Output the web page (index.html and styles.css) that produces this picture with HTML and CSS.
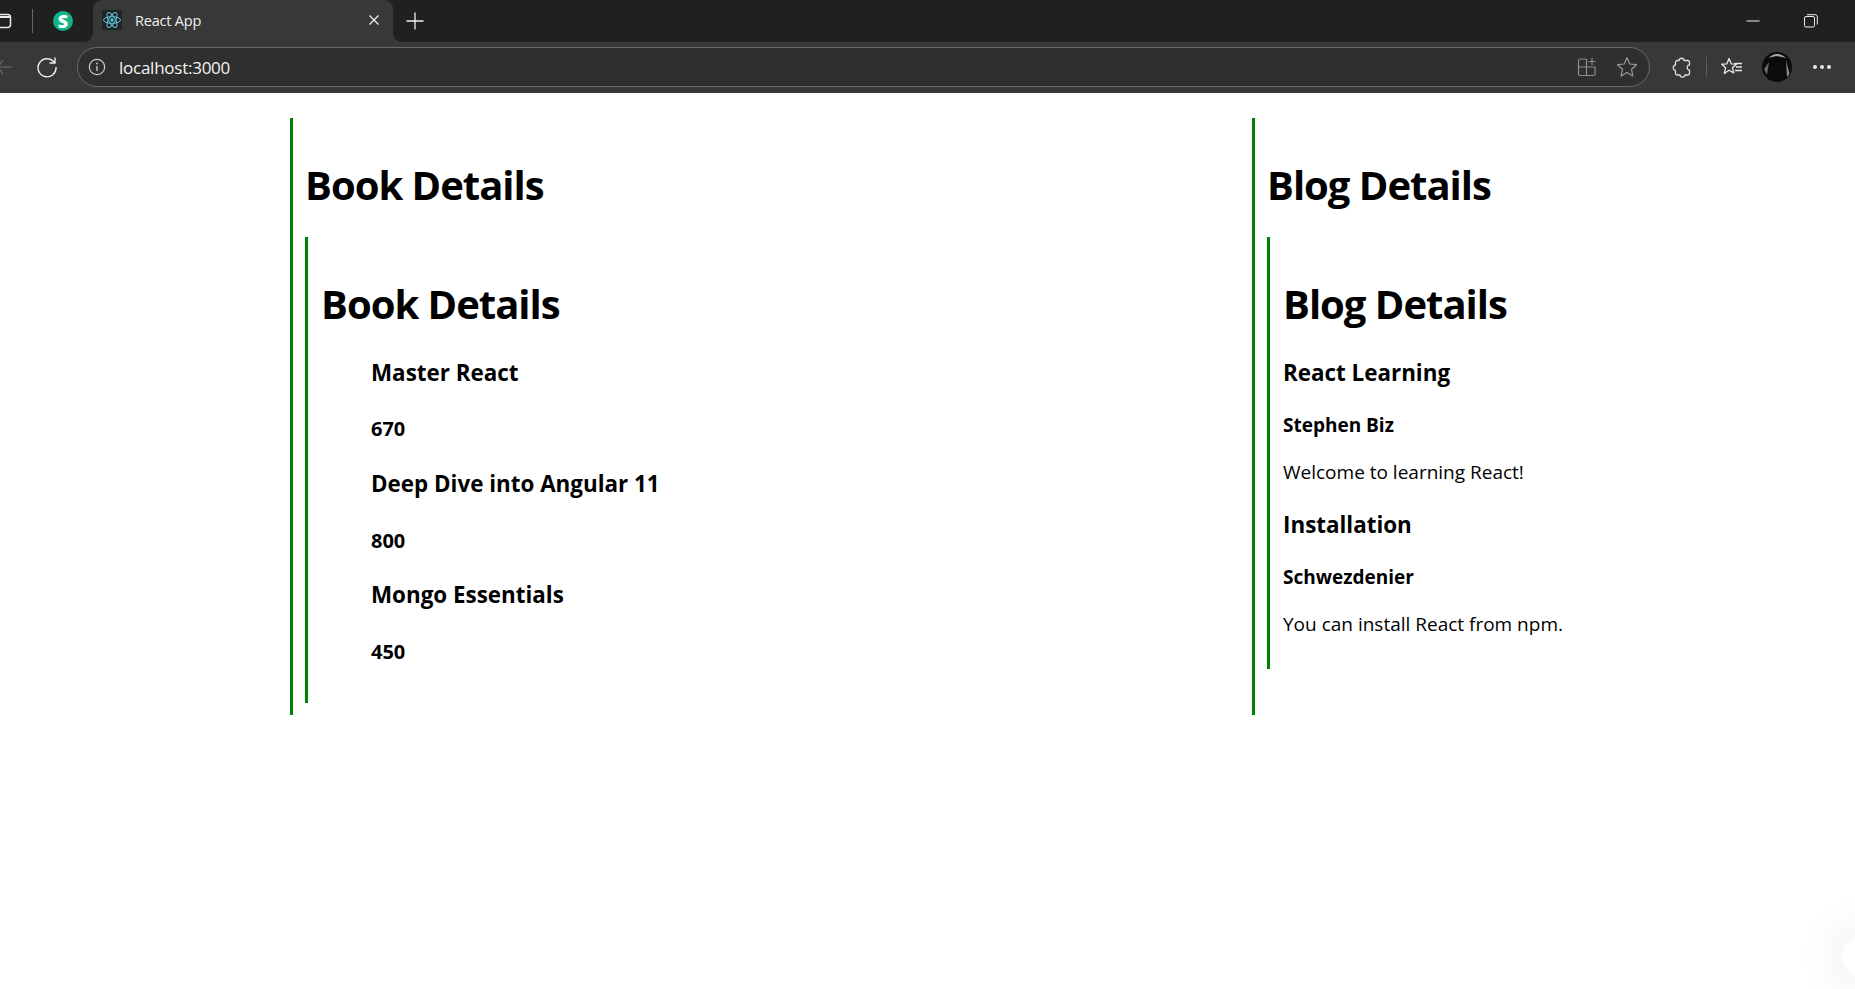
FILE: index.html
```html
<!DOCTYPE html>
<html lang="en">
<head>
<meta charset="utf-8">
<title>React App</title>
<link rel="stylesheet" href="styles.css">
</head>
<body>
<header class="browser">
  <div class="tabstrip">
    <div class="strip-left">
      <svg class="tabs-icon" width="14" height="20" viewBox="0 0 14 20"><path d="M-4 3.500H7.500A3 3 0 0 1 10.500 6.500V13.500A3 3 0 0 1 7.500 16.500H-4" fill="none" stroke="#e8e8e8" stroke-width="1.500"/><path d="M-4 5H10V7H-4z" fill="#e8e8e8"/></svg>
      <span class="strip-divider"></span>
      <span class="s-badge">S</span>
    </div>
    <div class="tab">
      <svg class="react-icon" width="20" height="20" viewBox="0 0 20 20"><rect width="20" height="20" rx="2" fill="#222"/><g fill="none" stroke="#61c6e0" stroke-width="1"><ellipse cx="10" cy="10" rx="8.500" ry="3.300"/><ellipse cx="10" cy="10" rx="8.500" ry="3.300" transform="rotate(60 10 10)"/><ellipse cx="10" cy="10" rx="8.500" ry="3.300" transform="rotate(120 10 10)"/></g><circle cx="10" cy="10" r="1.700" fill="#61c6e0"/></svg>
      <span class="tab-title">React App</span>
      <svg class="tab-close" width="12" height="12" viewBox="0 0 12 12"><path d="M1.500 1.500L10.500 10.500M10.500 1.500L1.500 10.500" stroke="#f0f0f0" stroke-width="1.300"/></svg>
    </div>
    <div class="strip-right">
      <svg class="new-tab" width="18" height="18" viewBox="0 0 18 18"><path d="M9 0.500V17.500M0.500 9H17.500" stroke="#f0f0f0" stroke-width="1.300"/></svg>
      <div class="window-controls">
        <svg width="14" height="14" viewBox="0 0 14 14"><path d="M0.500 7H13.500" stroke="#f0f0f0" stroke-width="1"/></svg>
        <svg width="14" height="14" viewBox="0 0 14 14"><rect x="0.500" y="2.500" width="10" height="10.500" rx="1.500" fill="none" stroke="#f0f0f0"/><path d="M3 0.700H11.500A2 2 0 0 1 13.300 2.700V10.500" fill="none" stroke="#f0f0f0"/></svg>
      </div>
    </div>
  </div>
  <div class="toolbar">
    <svg class="back-icon" width="12" height="18" viewBox="0 0 12 18"><path d="M-2 9H12M-2 9L3 2M-2 9L3 16" fill="none" stroke="#6e6e6e" stroke-width="1.200"/></svg>
    <svg class="reload-icon" width="22" height="22" viewBox="0 0 22 22"><path d="M18.300 6.500A9 9 0 1 0 20 11" fill="none" stroke="#eee" stroke-width="1.400"/><path d="M19 1.500V7H13.500" fill="none" stroke="#eee" stroke-width="1.400"/></svg>
    <div class="address">
      <svg class="info-icon" width="18" height="18" viewBox="0 0 18 18"><circle cx="9" cy="9" r="7.700" fill="none" stroke="#c8c8c8" stroke-width="1.200"/><path d="M9 8V13" stroke="#c8c8c8" stroke-width="1.400"/><circle cx="9" cy="5.500" r="0.900" fill="#c8c8c8"/></svg>
      <span class="url">localhost:3000</span>
      <svg class="apps-icon" width="20" height="20" viewBox="0 0 20 20"><path d="M9 2H3A1.500 1.500 0 0 0 1.500 3.500V17A1.500 1.500 0 0 0 3 18.500H16.500A1.500 1.500 0 0 0 18 17V10H1.500M9.500 2V18.500" fill="none" stroke="#8c8c8c" stroke-width="1.200"/><path d="M15 1V8M11.500 4.500H18.500" stroke="#8c8c8c" stroke-width="1.200"/></svg>
      <svg class="star-icon" width="22" height="22" viewBox="0 0 22 22"><path d="M11 1.700L13.800 8L20.500 8.700L15.500 13.200L16.900 20L11 16.500L5.100 20L6.500 13.200L1.500 8.700L8.200 8Z" fill="none" stroke="#9a9a9a" stroke-width="1.200" stroke-linejoin="round"/></svg>
    </div>
    <svg class="ext-icon" width="20" height="21" viewBox="0 0 20 21"><path d="M7 3.500C7 0.500 12 0.500 12 3.500H15.500A2 2 0 0 1 17.500 5.500V8C14.500 7.500 14.500 13.500 17.500 13V16A2 2 0 0 1 15.500 18H13C13 20.700 8 20.700 8 18H5.500A2 2 0 0 1 3.500 16V13.500C0.500 13.500 0.500 8 3.500 8V5.500A2 2 0 0 1 5.500 3.500Z" fill="none" stroke="#dcdcdc" stroke-width="1.300" stroke-linejoin="round"/></svg>
    <span class="tool-divider"></span>
    <svg class="fav-icon" width="22" height="20" viewBox="0 0 22 20"><path d="M8 1.500L10.200 6.800L15.500 7.200L11.500 10.800L12.700 16L8 13.200L3.300 16.500L4.600 10.800L0.800 7.200L5.900 6.800Z" fill="none" stroke="#e8e8e8" stroke-width="1.300" stroke-linejoin="round"/><path d="M13.500 6.500H21M15 10H21M14 13.500H21" stroke="#e8e8e8" stroke-width="1.300"/></svg>
    <svg class="avatar" width="30" height="30" viewBox="0 0 30 30"><circle cx="15" cy="15" r="15" fill="#0b0b0b"/><path d="M7 6C11 0.500 19 0.500 24 6L20 5L14 4Z" fill="#a8a8a8"/><path d="M24 8L27.500 22L25 25Z" fill="#8c8c8c"/><path d="M2 17L7 10L5 23Z" fill="#6a6a6a"/></svg>
    <div class="dots"><span></span><span></span><span></span></div>
  </div>
</header>
<main class="page">
  <section class="panel">
    <h1>Book Details</h1>
    <div class="panel inner">
      <h1>Book Details</h1>
      <ul class="book-list">
        <li><h3>Master React</h3><h4>670</h4></li>
        <li><h3>Deep Dive into Angular 11</h3><h4>800</h4></li>
        <li><h3>Mongo Essentials</h3><h4>450</h4></li>
      </ul>
    </div>
  </section>
  <section class="panel">
    <h1>Blog Details</h1>
    <div class="panel inner">
      <h1>Blog Details</h1>
      <article><h3>React Learning</h3><h4>Stephen Biz</h4><p>Welcome to learning React!</p></article>
      <article><h3>Installation</h3><h4>Schwezdenier</h4><p>You can install React from npm.</p></article>
    </div>
  </section>
</main>
<div class="corner-bubble"></div>
</body>
</html>
```

FILE: styles.css
```css
* { box-sizing: border-box; }
html, body { margin: 0; height: 100%; }
body {
  background: #fff;
  color: #000;
  font-family: "Open Sans", "Noto Sans", sans-serif;
  font-size: 19px;
  overflow: hidden;
  position: relative;
}
.browser { font-family: "Open Sans", sans-serif; color: #f0f0f0; }
.tabstrip {
  display: flex;
  height: 42px;
  background: linear-gradient(#202020 50%, #383838 50%);
}
.strip-left {
  width: 93px;
  display: flex;
  align-items: center;
  background: #202020;
  border-bottom-right-radius: 9px;
}
.tabs-icon { margin-right: 18px; }
.strip-divider { width: 1px; height: 24px; background: #666; }
.s-badge {
  width: 20px;
  height: 20px;
  margin-left: 20px;
  border-radius: 50%;
  background: #0fb386;
  color: #fff;
  font-weight: 800;
  font-size: 18px;
  line-height: 20px;
  text-align: center;
}
.tab {
  width: 300px;
  display: flex;
  align-items: center;
  padding: 0 13px 2px 9px;
  background: #383838;
  border-radius: 9px 9px 0 0;
}
.tab-title { flex: 1; margin-left: 13px; font-size: 14.500px; letter-spacing: -0.200px; }
.strip-right {
  flex: 1;
  display: flex;
  align-items: center;
  justify-content: space-between;
  background: #202020;
  border-bottom-left-radius: 9px;
  padding-left: 13px;
}
.window-controls { display: flex; gap: 44px; margin-right: 37px; }
.toolbar {
  display: flex;
  align-items: center;
  height: 51px;
  background: #383838;
  padding-bottom: 1px;
}
.back-icon { margin-right: 24px; }
.reload-icon { margin-right: 19px; }
.address {
  width: 1573px;
  height: 40px;
  display: flex;
  align-items: center;
  border: 1px solid #6a6a6a;
  border-radius: 20px;
  background: #2f2f2f;
  padding: 0 11px 0 10px;
}
.url { flex: 1; margin-left: 13px; font-size: 17px; letter-spacing: -0.250px; color: #f4f4f4; }
.apps-icon { margin-right: 19px; margin-left: -2px; }
.ext-icon { margin-left: 22px; }
.tool-divider { width: 1px; height: 20px; background: #5c5c5c; margin: 0 14px; }
.avatar { margin-left: 19px; }
.dots { display: flex; gap: 3px; margin-left: 21px; }
.dots span { width: 4px; height: 4px; border-radius: 50%; background: #e8e8e8; }

.page {
  display: grid;
  grid-template-columns: 962px 1fr;
  align-items: start;
  padding: 25px 0 0 290px;
}
.panel {
  border-left: 3px solid green;
  padding: 12px;
  align-self: stretch;
}
.inner { padding: 12px 0 12px 13px; margin-right: -12px; align-self: start; }
h1 {
  margin: 28px 0 26px;
  font-size: 40px;
  line-height: 53px;
  font-weight: 700;
  letter-spacing: -1px;
}
.book-list { margin: 0 0 26.500px; padding: 0 0 0 50px; list-style: none; }
h3 {
  margin: 0;
  font-size: 22.400px;
  line-height: 31px;
  font-weight: 700;
}
h4 {
  margin: 0;
  font-size: 19px;
  line-height: 27px;
  font-weight: 700;
}
.book-list h3 { margin-top: 25.800px; }
.book-list h4 { margin-top: 27.400px; font-size: 20px; }
.book-list li:first-child h3, article:first-of-type h3 { margin-top: 27px; }
article h3 { margin-bottom: 23.500px; }
article h4 { margin-bottom: 20px; }
article p { margin: 0 0 23.500px; line-height: 27px; }
article:last-child p { margin-bottom: 19px; }
.corner-bubble {
  position: absolute;
  right: -27px;
  bottom: 13px;
  width: 40px;
  height: 40px;
  border-radius: 50%;
  background: #fff;
  box-shadow: 0 0 50px rgba(0, 0, 0, 0.14);
}
```
